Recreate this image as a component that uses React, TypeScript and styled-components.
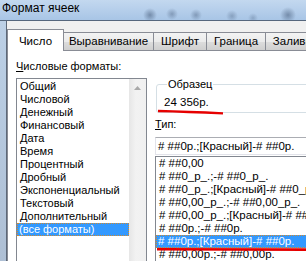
import React from 'react'
import styled, { createGlobalStyle } from 'styled-components'

const GlobalStyle = createGlobalStyle`
  body {
    margin: 0;
    background: #f0f0f0;
  }
`

const Window = styled.div`
  width: 306px;
  height: 261px;
  overflow: hidden;
  display: flex;
  flex-direction: column;
  background: #f0f0f0;
  font-family: 'Liberation Sans', Arial, sans-serif;
  font-size: 11px;
  color: #000;
`

const TitleBar = styled.div`
  flex: none;
  height: 20px;
  padding-left: 2px;
  border-bottom: 1px solid #56677d;
  background:
    radial-gradient(circle at 150px 15px, rgba(45, 65, 95, 0.45) 0, rgba(45, 65, 95, 0) 7px),
    radial-gradient(circle at 172px 14px, rgba(45, 65, 95, 0.35) 0, rgba(45, 65, 95, 0) 6px),
    radial-gradient(circle at 196px 15px, rgba(45, 65, 95, 0.35) 0, rgba(45, 65, 95, 0) 6px),
    radial-gradient(circle at 232px 16px, rgba(45, 65, 95, 0.3) 0, rgba(45, 65, 95, 0) 6px),
    radial-gradient(circle at 253px 18px, rgba(45, 65, 95, 0.25) 0, rgba(45, 65, 95, 0) 5px),
    radial-gradient(circle at 288px 15px, rgba(45, 65, 95, 0.45) 0, rgba(45, 65, 95, 0) 8px),
    linear-gradient(#c3d8ef, #a8c5e6);
  font-size: 12px;
  line-height: 16px;
`

const Body = styled.div`
  flex: 1;
  display: flex;
  min-height: 0;
`

const Frame = styled.div`
  flex: none;
  width: 6px;
  background: linear-gradient(#bcd0e6, #aebfd4);
  border-right: 1px solid #5d6878;
`

const Content = styled.div`
  flex: 1;
  display: flex;
  flex-direction: column;
  min-width: 0;
`

const TabStrip = styled.div`
  flex: none;
  height: 29px;
  display: flex;
  align-items: flex-end;
  white-space: nowrap;
`

const Tab = styled.div<{ $w: number; $active?: boolean }>`
  flex: none;
  box-sizing: border-box;
  width: ${(p) => p.$w}px;
  height: ${(p) => (p.$active ? 22 : 18)}px;
  margin-bottom: ${(p) => (p.$active ? -1 : 0)}px;
  margin-left: ${(p) => (p.$active ? 0 : -1)}px;
  padding-top: ${(p) => (p.$active ? 5 : 2)}px;
  position: relative;
  z-index: ${(p) => (p.$active ? 1 : 0)};
  border: 1px solid #898c95;
  border-bottom: none;
  background: ${(p) =>
    p.$active ? '#fff' : 'linear-gradient(#f3f3f3 0%, #ebebeb 50%, #dddddd 51%, #cfcfcf 100%)'};
  text-align: center;
  line-height: 13px;
  font-size: 11.5px;
`

const TabPage = styled.div`
  flex: 1;
  display: flex;
  align-items: flex-start;
  gap: 8px;
  padding: 9px 0 0 8px;
  background: #fff;
  border-top: 1px solid #898c95;
  border-left: 1px solid #898c95;
`

const LeftColumn = styled.div`
  flex: none;
  width: 131px;
  display: flex;
  flex-direction: column;
  gap: 5px;
`

const Label = styled.div`
  line-height: 13px;
  font-size: 11px;
`

const ListBox = styled.div`
  display: flex;
  height: 200px;
  border: 1px solid #828790;
`

const Items = styled.div`
  flex: 1;
  padding-top: 1px;
`

const Row = styled.div<{ $selected?: boolean }>`
  height: 13px;
  line-height: 13px;
  padding-left: ${(p) => (p.$selected ? 2 : 3)}px;
  white-space: nowrap;
  font-size: 11px;
  background: ${(p) => (p.$selected ? '#3399ff' : 'transparent')};
  color: ${(p) => (p.$selected ? '#fff' : '#000')};
  outline: ${(p) => (p.$selected ? '1px dotted #d08a30' : 'none')};
  outline-offset: -1px;
`

const CodeRow = styled(Row)`
  font-size: 11.5px;
`

const ScrollBar = styled.div`
  flex: none;
  width: 17px;
  background: linear-gradient(to right, #e6e6e6, #f2f2f2 40%, #f0f0f0);
  display: flex;
  justify-content: center;
  padding-top: 7px;
  box-sizing: border-box;
`

const RightColumn = styled.div`
  flex: none;
  width: 200px;
  margin-top: 18px;
  position: relative;
`

const Sample = styled.fieldset`
  margin: 0 0 0 1px;
  padding: 5px 0 3px 7px;
  border: 1px solid #d5dfe5;
  border-radius: 3px;
  legend {
    margin-left: 3px;
    padding: 0 1px;
    line-height: 13px;
    font-size: 11px;
  }
`

const SampleValue = styled.div`
  line-height: 13px;
  font-size: 11.5px;
`

const TypeLabel = styled(Label)`
  margin-top: 5px;
`

const TypeInput = styled.div`
  margin-top: 6px;
  height: 16px;
  line-height: 16px;
  padding-left: 2px;
  border: 1px solid #e2e3ea;
  border-top-color: #abadb3;
  font-size: 11.5px;
  white-space: nowrap;
`

const TypeList = styled.div`
  position: relative;
  margin-top: 1px;
  height: 120px;
  border: 1px solid #828790;
  border-right: none;
`

const Mark = styled.svg`
  position: absolute;
  pointer-events: none;
`

const formats = [
  'Общий',
  'Числовой',
  'Денежный',
  'Финансовый',
  'Дата',
  'Время',
  'Процентный',
  'Дробный',
  'Экспоненциальный',
  'Текстовый',
  'Дополнительный',
  '(все форматы)',
]

const codes = [
  '# ##0,00',
  '# ##0_р_.;-# ##0_р_.',
  '# ##0_р_.;[Красный]-# ##0_р_.',
  '# ##0,00_р_.;-# ##0,00_р_.',
  '# ##0,00_р_.;[Красный]-# ##0,00_р_.',
  '# ##0р.;-# ##0р.',
  '# ##0р.;[Красный]-# ##0р.',
  '# ##0,00р.;-# ##0,00р.',
]

const tabs = [
  { label: 'Число', w: 57 },
  { label: 'Выравнивание', w: 91 },
  { label: 'Шрифт', w: 54 },
  { label: 'Граница', w: 60 },
  { label: 'Заливка', w: 60 },
]

export default function App() {
  return (
    <>
      <GlobalStyle />
      <Window>
        <TitleBar>Формат ячеек</TitleBar>
        <Body>
          <Frame />
          <Content>
            <TabStrip>
              {tabs.map((t, i) => (
                <Tab key={t.label} $w={t.w} $active={i === 0}>
                  {t.label}
                </Tab>
              ))}
            </TabStrip>
            <TabPage>
              <LeftColumn>
                <Label>
                  <u>Ч</u>исловые форматы:
                </Label>
                <ListBox>
                  <Items>
                    {formats.map((f) => (
                      <Row key={f} $selected={f === '(все форматы)'}>
                        {f}
                      </Row>
                    ))}
                  </Items>
                  <ScrollBar>
                    <svg width='7' height='4' viewBox='0 0 7 4'>
                      <path d='M0 4 L3.5 0 L7 4 Z' fill='#a9a9a9' />
                    </svg>
                  </ScrollBar>
                </ListBox>
              </LeftColumn>
              <RightColumn>
                <Sample>
                  <legend>Образец</legend>
                  <SampleValue>24 356р.</SampleValue>
                </Sample>
                <Mark width='70' height='8' style={{ left: 2, top: 30 }}>
                  <path d='M1 3 Q 30 3.6 66 5.4' stroke='#e60000' strokeWidth='2.3' fill='none' />
                </Mark>
                <TypeLabel>
                  <u>Т</u>ип:
                </TypeLabel>
                <TypeInput># ##0р.;[Красный]-# ##0р.</TypeInput>
                <TypeList>
                  {codes.map((c, i) => (
                    <CodeRow key={c} $selected={i === 6}>
                      {c}
                    </CodeRow>
                  ))}
                  <Mark width='160' height='5' style={{ left: 0, top: 90 }}>
                    <path d='M1 2.3 L160 2.6' stroke='#e60000' strokeWidth='2.6' fill='none' />
                  </Mark>
                </TypeList>
              </RightColumn>
            </TabPage>
          </Content>
        </Body>
      </Window>
    </>
  )
}
